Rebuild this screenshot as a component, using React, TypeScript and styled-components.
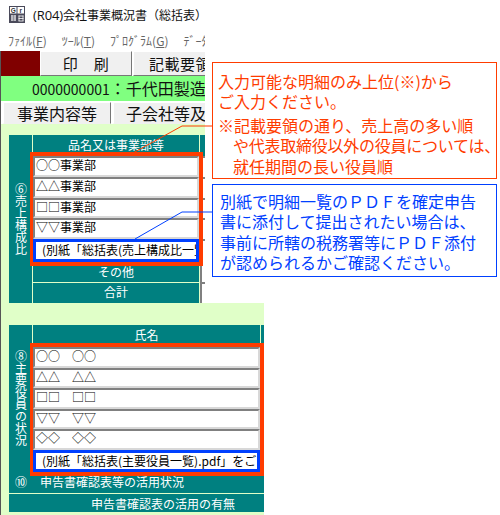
import styled, {createGlobalStyle} from "styled-components";

const GlobalStyle = createGlobalStyle`
  html, body {
    margin: 0;
    padding: 0;
    background: #fff;
  }
  body {
    font-family: "Noto Sans CJK JP", "Liberation Sans", sans-serif;
    overflow: hidden;
  }
`

const Page = styled.div`
  position: relative;
  width: 500px;
  height: 515px;
  overflow: hidden;
  background: #fff;
`

// 上のウィンドウ
const TopWindow = styled.div`
  width: 205px;
  height: 303px;
  overflow: hidden;
  display: flex;
  flex-direction: column;
`

const TitleBar = styled.div`
  height: 30px;
  flex-shrink: 0;
  display: flex;
  align-items: center;
  padding-left: 9px;
  gap: 8px;
  font-size: 12px;
  color: #111;
  white-space: nowrap;
`

const AppIcon = styled.svg`
  width: 16px;
  height: 17px;
  flex-shrink: 0;
  margin-top: -1px;
`

const TitleLatin = styled.span`
  font-family: "Open Sans", "Liberation Sans", sans-serif;
  font-size: 13px;
  letter-spacing: -0.1px;
`

const MenuBar = styled.div`
  height: 21px;
  flex-shrink: 0;
  display: flex;
  align-items: center;
  padding: 0 0 0 8px;
  gap: 15px;
  font-size: 12px;
  color: #666;
  white-space: nowrap;

  u {
    text-underline-offset: 1px;
  }
`

const Framed = styled.div`
  border-left: 1px solid #555;
`

const Toolbar = styled(Framed)`
  height: 25px;
  flex-shrink: 0;
  display: flex;
`

const Swatch = styled.div`
  width: 39px;
  flex-shrink: 0;
  background: #800000;
`

const ToolButton = styled.div<{ $width: number }>`
  width: ${(props) => props.$width}px;
  flex-shrink: 0;
  box-sizing: border-box;
  display: flex;
  align-items: center;
  justify-content: center;
  background: #f0f0f0;
  border: 1px solid;
  border-color: #fff #777 #777 #fff;
  font-size: 15px;
  letter-spacing: 0.5px;
  color: #111;
  white-space: nowrap;
  margin-right: 1px;
`

const CompanyBar = styled(Framed)`
  height: 25px;
  flex-shrink: 0;
  box-sizing: border-box;
  background: #80ff80;
  padding-left: 31px;
  font-size: 16px;
  line-height: 25px;
  color: #111;
  white-space: nowrap;
`

const CompanyCode = styled.span`
  font-size: 14px;
`

const TabRow = styled(Framed)`
  height: 23px;
  flex-shrink: 0;
  display: flex;
  padding: 1px 0 0 2px;
  box-sizing: border-box;
`

const Tab = styled.div<{ $width: number }>`
  width: ${(props) => props.$width}px;
  flex-shrink: 0;
  box-sizing: border-box;
  background: #f0f0f0;
  border: 1px solid;
  border-color: #fff #777 #f0f0f0 #fff;
  margin-right: 2px;
  font-size: 16px;
  line-height: 20px;
  text-align: center;
  color: #111;
  white-space: nowrap;
`

const Sheet = styled(Framed)`
  flex: 1;
  background: #e0ffc8;
  padding: 11px 0 0 8px;
  min-height: 0;
`

// 下のウィンドウ
const LowerWindow = styled(Framed)`
  width: 264px;
  height: 212px;
  box-sizing: border-box;
  background: #e0ffc8;
  padding: 22px 0 3px 8px;
`

const TealBlock = styled.div`
  display: flex;
  background: #008080;
  color: #fff;
  font-size: 12px;
  white-space: nowrap;
`

const SideLabel = styled.div`
  width: 23px;
  flex-shrink: 0;
  box-sizing: content-box;
  border-right: 1px solid #e0ffc8;
  display: flex;
  align-items: center;
  justify-content: center;
  writing-mode: vertical-rl;
  text-orientation: upright;
  font-size: 12px;
  line-height: 12px;
  letter-spacing: 0;
`

const MainColumn = styled.div<{ $width: number }>`
  width: ${(props) => props.$width}px;
  flex-shrink: 0;
`

const SideColumn = styled.div`
  flex: 1;
  border-left: 1px solid #e0ffc8;
  min-width: 0;
`

const HeadCell = styled.div<{ $height: number }>`
  height: ${(props) => props.$height}px;
  text-align: center;
  line-height: 18px;
  padding-top: 1px;
  box-sizing: border-box;
`

const Highlight = styled.div`
  position: relative;

  &::after {
    content: "";
    position: absolute;
    inset: -4px -4px -4px -3px;
    border: solid #ff3c00;
    border-width: 4px 4px 4px 3px;
    pointer-events: none;
  }
`

const EntryRow = styled.div<{ $height: number }>`
  height: ${(props) => props.$height}px;
  box-sizing: border-box;
  background: #fff;
  border: 2px solid;
  border-color: #808080 #d8d8d8 #d8d8d8 #808080;
  padding-left: 1px;
  font-size: 12px;
  line-height: 14px;
  color: #000;
  overflow: hidden;
`

const NoteRow = styled.div<{ $height: number }>`
  height: ${(props) => props.$height}px;
  box-sizing: border-box;
  background: #fff;
  border: 3px solid #0040ff;
  padding-left: 6px;
  font-size: 12px;
  line-height: 16px;
  color: #000;
  overflow: hidden;
  position: relative;
  z-index: 1;
`

const LabelRow = styled.div<{ $height: number }>`
  height: ${(props) => props.$height}px;
  box-sizing: border-box;
  border-top: 1px solid ${(props) => props.$height > 20 ? '#e0ffc8' : 'transparent'};
  text-align: center;
  line-height: 18px;
`

const StubCell = styled.div<{ $height: number }>`
  height: ${(props) => props.$height}px;
  box-sizing: border-box;
  background: #fff;
  border-top: 2px solid #808080;
  border-left: 2px solid #808080;
`

const FooterRow = styled.div<{ $indent: number; $height: number }>`
  height: ${(props) => props.$height}px;
  box-sizing: border-box;
  background: #008080;
  color: #fff;
  font-size: 12px;
  line-height: 19px;
  padding-left: ${(props) => props.$indent}px;
  white-space: nowrap;
  display: flex;
  gap: 13px;
`

const FooterRule = styled(FooterRow)`
  border-top: 1px solid #e0ffc8;
`

// 吹き出し
const Callout = styled.div<{ $color: string; $top: number; $height: number }>`
  position: absolute;
  left: 212px;
  top: ${(props) => props.$top}px;
  width: 285px;
  height: ${(props) => props.$height}px;
  box-sizing: border-box;
  border: 1px solid ${(props) => props.$color};
  background: #fff;
  color: ${(props) => props.$color};
  font-size: 16px;
  line-height: 20.4px;
  white-space: nowrap;
`

const RedCallout = styled(Callout)`
  padding: 8px 0 0 5px;
`

const BlueCallout = styled(Callout)`
  padding: 6px 0 0 7px;
`

const NoteGap = styled.div`
  height: 3px;
`

const Indented = styled.div`
  padding-left: 15px;
`

const TightIndented = styled(Indented)`
  letter-spacing: -0.25px;
`

const Leaders = styled.svg`
  position: absolute;
  left: 0;
  top: 0;
  width: 500px;
  height: 515px;
  pointer-events: none;
`

const salesRows = ['○○事業部', '△△事業部', '□□事業部', '▽▽事業部']
const officerRows = ['○○　○○', '△△　△△', '□□　□□', '▽▽　▽▽', '◇◇　◇◇']

const App = () => {
    return (
        <Page>
            <GlobalStyle/>
            <TopWindow>
                <TitleBar>
                    <AppIcon viewBox="0 0 16 17">
                        <rect width="16" height="17" fill="#4a4a5a"/>
                        <rect x="1" y="1" width="6.5" height="6.5" fill="#fff"/>
                        <rect x="8.5" y="1" width="6.5" height="6.5" fill="#fff"/>
                        <text x="4.2" y="6.6" fontSize="6.5" fontWeight="700" fill="#333" textAnchor="middle"
                              fontFamily="Liberation Sans">G</text>
                        <text x="11.8" y="6.6" fontSize="6.5" fontWeight="700" fill="#333" textAnchor="middle"
                              fontFamily="Liberation Sans">r</text>
                        <path d="M2 10h5M2 12h5M2 14h5M3 9v6M6 9v6M9.5 10h5M9.5 12.5h5M9.5 15h5M10 9.5v5.500M14 9.500v5.500"
                              stroke="#fff" strokeWidth="0.8" fill="none"/>
                    </AppIcon>
                    <span><TitleLatin>(R04)</TitleLatin>会社事業概況書（総括表）</span>
                </TitleBar>
                <MenuBar>
                    <span>ﾌｧｲﾙ(<u>F</u>)</span>
                    <span>ﾂｰﾙ(<u>T</u>)</span>
                    <span>ﾌﾟﾛｸﾞﾗﾑ(<u>G</u>)</span>
                    <span>ﾃﾞｰﾀｽ</span>
                </MenuBar>
                <Toolbar>
                    <Swatch/>
                    <ToolButton $width={92}>印　刷</ToolButton>
                    <ToolButton $width={94}>記載要領</ToolButton>
                </Toolbar>
                <CompanyBar><CompanyCode>0000000001</CompanyCode>：千代田製造</CompanyBar>
                <TabRow>
                    <Tab $width={108}>事業内容等</Tab>
                    <Tab $width={106}>子会社等及</Tab>
                </TabRow>
                <Sheet>
                    <TealBlock>
                        <SideLabel>⑥売上構成比</SideLabel>
                        <MainColumn $width={166}>
                            <HeadCell $height={21}>品名又は事業部等</HeadCell>
                            <Highlight>
                                {salesRows.map((row) => (
                                    <EntryRow key={row} $height={20.75}>{row}</EntryRow>
                                ))}
                                <NoteRow $height={23}>(別紙「総括表(売上構成比一覧).pdf」</NoteRow>
                            </Highlight>
                            <LabelRow $height={20}>その他</LabelRow>
                            <LabelRow $height={21}>合計</LabelRow>
                        </MainColumn>
                        <SideColumn>
                            <HeadCell $height={21}/>
                            {salesRows.map((row) => (
                                <StubCell key={row} $height={20.75}/>
                            ))}
                            <StubCell $height={43}/>
                            <StubCell $height={21}/>
                        </SideColumn>
                    </TealBlock>
                </Sheet>
            </TopWindow>
            <LowerWindow>
                <TealBlock>
                    <SideLabel>⑧主要役員の状況</SideLabel>
                    <MainColumn $width={227}>
                        <HeadCell $height={22}>氏名</HeadCell>
                        <Highlight>
                            {officerRows.map((row) => (
                                <EntryRow key={row} $height={20.6}>{row}</EntryRow>
                            ))}
                            <NoteRow $height={22}>(別紙「総括表(主要役員一覧).pdf」をご</NoteRow>
                        </Highlight>
                    </MainColumn>
                    <SideColumn/>
                </TealBlock>
                <FooterRow $indent={6} $height={21}>
                    <span>⑩</span>
                    <span>申告書確認表等の活用状況</span>
                </FooterRow>
                <FooterRule $indent={82} $height={19}>申告書確認表の活用の有無</FooterRule>
            </LowerWindow>
            <Leaders viewBox="0 0 500 515">
                <polyline points="133,153 182,126 213,126" fill="none" stroke="#ff3c00" strokeWidth="1"/>
                <polyline points="135,239 182,212 213,212" fill="none" stroke="#0040ff" strokeWidth="1"/>
            </Leaders>
            <RedCallout $color="#ff3c00" $top={62} $height={117}>
                <div>入力可能な明細のみ上位(※)から</div>
                <div>ご入力ください。</div>
                <NoteGap/>
                <div>※記載要領の通り、売上高の多い順</div>
                <TightIndented>や代表取締役以外の役員については、</TightIndented>
                <Indented>就任期間の長い役員順</Indented>
            </RedCallout>
            <BlueCallout $color="#0040ff" $top={184} $height={93}>
                <div>別紙で明細一覧のＰＤＦを確定申告</div>
                <div>書に添付して提出されたい場合は、</div>
                <div>事前に所轄の税務署等にＰＤＦ添付</div>
                <div>が認められるかご確認ください。</div>
            </BlueCallout>
        </Page>
    )
}

export default App
